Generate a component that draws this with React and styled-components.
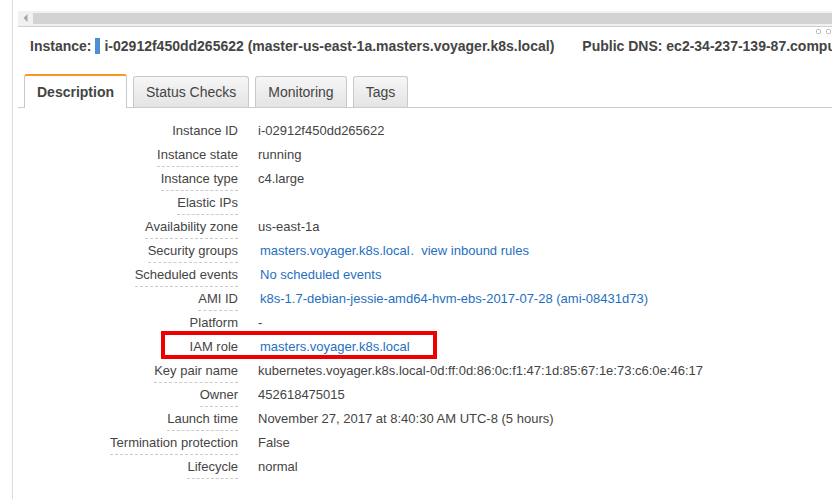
import React from "react";
import styled, { createGlobalStyle } from "styled-components";

const GlobalStyle = createGlobalStyle`
  html, body {
    margin: 0;
    padding: 0;
    background: #fff;
    overflow: hidden;
  }
  body {
    font-family: "Liberation Sans", Arial, sans-serif;
    color: #444;
  }
`;

const Page = styled.div`
  padding-left: 12px;
  height: 100vh;
`;

const Panel = styled.div`
  position: relative;
  height: 100%;
  border-left: 1px solid #dcdcdc;
  padding: 11px 0 0 5px;
  box-sizing: border-box;
  overflow: hidden;
`;

/* horizontal scroll bar of the split pane */
const ScrollTrack = styled.div`
  display: flex;
  height: 15px;
  background: #f1f1f1;
  border-bottom: 1px solid #cfcfcf;
`;

const ScrollButton = styled.div`
  width: 15px;
  display: flex;
  align-items: center;
  justify-content: center;
  margin-top: -2px;
`;

const ScrollThumb = styled.div`
  flex: 1;
  height: 11px;
  margin-top: 2px;
  background: #d3d3d3;
`;

const PaneIcons = styled.div`
  position: absolute;
  top: 29px;
  right: 1px;
  display: flex;
  gap: 5px;
`;

const Header = styled.div`
  display: flex;
  align-items: center;
  margin: 10px 0 0 12px;
  height: 18px;
  font-size: 14px;
  font-weight: bold;
  white-space: nowrap;
  color: #444;
`;

const StateMark = styled.span`
  flex-shrink: 0;
  display: inline-block;
  width: 5px;
  height: 16px;
  margin: 0 4px;
  background: #4d90cf;
`;

const HeaderItem = styled.span`
  flex-shrink: 0;
  margin-left: ${(p) => p.gap || 0}px;
`;

const TabBar = styled.div`
  display: flex;
  align-items: flex-end;
  gap: 6px;
  margin-top: 19px;
  padding-left: 6px;
  border-bottom: 1px solid #cccccc;
`;

const Tab = styled.div`
  display: flex;
  align-items: center;
  box-sizing: border-box;
  padding: 0 12px;
  font-size: 14px;
  white-space: nowrap;
  border: 1px solid #c9c9c9;
  border-bottom: none;
  border-radius: 3px 3px 0 0;
  color: #444;
  height: ${(p) => (p.active ? 34 : 31)}px;
  margin-bottom: ${(p) => (p.active ? -1 : 0)}px;
  font-weight: ${(p) => (p.active ? "bold" : "normal")};
  background: ${(p) => (p.active ? "#fff" : "linear-gradient(#f6f6f6, #e4e4e4)")};
  border-top: ${(p) => (p.active ? "2px solid #f7981d" : "1px solid #c9c9c9")};
`;

const Details = styled.div`
  margin-top: 11px;
`;

const Row = styled.div`
  position: relative;
  display: grid;
  grid-template-columns: 220px 1fr;
  column-gap: 20px;
  height: 24px;
  padding-top: 4px;
  box-sizing: border-box;
  font-size: 13px;
  line-height: 16px;
`;

const Label = styled.div`
  text-align: right;
`;

const LabelText = styled.span`
  display: inline-block;
  padding-bottom: 3px;
  color: #444;
  border-bottom: ${(p) => (p.plain ? "none" : "1px dashed #cccccc")};
`;

const Value = styled.div`
  white-space: nowrap;
  color: #444;
`;

const Link = styled.span`
  color: #1f6fc0;
  margin-left: ${(p) => p.offset ?? 2}px;
`;

const Highlight = styled.div`
  position: absolute;
  left: 143px;
  top: -4px;
  width: 276px;
  height: 28px;
  box-sizing: border-box;
  border: 4px solid #ee0000;
  pointer-events: none;
`;

const LeftArrow = () => (
  <svg width="5" height="8" viewBox="0 0 5 8">
    <path d="M4.5 0 L0.5 4 L4.5 8 Z" fill="#a6a6a6" />
  </svg>
);

const PaneIcon = () => (
  <svg width="5" height="5" viewBox="0 0 5 5">
    <rect x="0.5" y="0.5" width="4" height="4" rx="1" fill="none" stroke="#b5b5b5" />
  </svg>
);

const rows = [
  { label: "Instance ID", value: "i-02912f450dd265622", plain: true },
  { label: "Instance state", value: "running" },
  { label: "Instance type", value: "c4.large" },
  { label: "Elastic IPs", value: "" },
  { label: "Availability zone", value: "us-east-1a" },
  { label: "Security groups", sg: true },
  { label: "Scheduled events", link: "No scheduled events" },
  { label: "AMI ID", link: "k8s-1.7-debian-jessie-amd64-hvm-ebs-2017-07-28 (ami-08431d73)" },
  { label: "Platform", value: "-" },
  { label: "IAM role", link: "masters.voyager.k8s.local", highlight: true },
  { label: "Key pair name", value: "kubernetes.voyager.k8s.local-0d:ff:0d:86:0c:f1:47:1d:85:67:1e:73:c6:0e:46:17" },
  { label: "Owner", value: "452618475015" },
  { label: "Launch time", value: "November 27, 2017 at 8:40:30 AM UTC-8 (5 hours)" },
  { label: "Termination protection", value: "False" },
  { label: "Lifecycle", value: "normal" },
];

const tabs = ["Description", "Status Checks", "Monitoring", "Tags"];

const App = () => {
  return (
    <Page>
      <GlobalStyle />
      <Panel>
        <ScrollTrack>
          <ScrollButton>
            <LeftArrow />
          </ScrollButton>
          <ScrollThumb />
        </ScrollTrack>
        <PaneIcons>
          <PaneIcon />
          <PaneIcon />
        </PaneIcons>

        <Header>
          <HeaderItem>Instance:</HeaderItem>
          <StateMark />
          <HeaderItem>i-02912f450dd265622 (master-us-east-1a.masters.voyager.k8s.local)</HeaderItem>
          <HeaderItem gap={28}>Public DNS: ec2-34-237-139-87.compute-1.amazonaws.com</HeaderItem>
        </Header>

        <TabBar>
          {tabs.map((t, i) => (
            <Tab key={t} active={i === 0}>
              {t}
            </Tab>
          ))}
        </TabBar>

        <Details>
          {rows.map((r) => (
            <Row key={r.label}>
              <Label>
                <LabelText plain={r.plain}>{r.label}</LabelText>
              </Label>
              <Value>
                {r.sg ? (
                  <>
                    <Link>masters.voyager.k8s.local</Link>
                    <Link offset={1}>.</Link>
                    <Link offset={7}>view inbound rules</Link>
                  </>
                ) : r.link ? (
                  <Link>{r.link}</Link>
                ) : (
                  r.value
                )}
              </Value>
              {r.highlight && <Highlight />}
            </Row>
          ))}
        </Details>
      </Panel>
    </Page>
  );
};

export default App;
